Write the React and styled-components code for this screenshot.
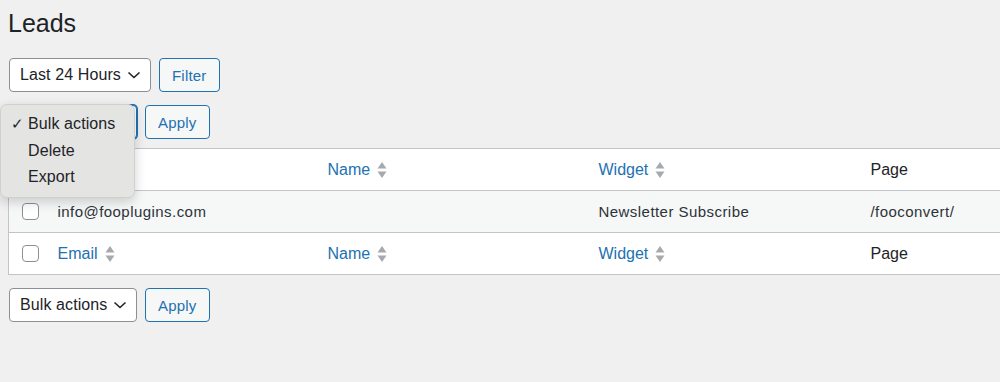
import styled, { createGlobalStyle } from 'styled-components';

const GlobalStyle = createGlobalStyle`
  html, body {
    margin: 0;
    padding: 0;
    background: #f0f0f1;
    overflow: hidden;
  }
  body {
    font-family: "Liberation Sans", Arial, sans-serif;
    color: #1d2327;
  }
`;

const Page = styled.div`
  padding: 0 0 0 8px;
  width: 1200px;
`;

const Title = styled.h1`
  margin: 0;
  padding-top: 8px;
  font-size: 25px;
  font-weight: 400;
  line-height: 30px;
  color: #1d2327;
`;

const Toolbar = styled.div`
  display: flex;
  align-items: center;
  gap: 8px;
  margin-top: ${p => p.$top || 0}px;
  position: relative;
`;

const SelectBox = styled.div`
  box-sizing: border-box;
  height: 34px;
  width: ${p => p.$width}px;
  margin-left: 1px;
  padding: 0 9px 0 10px;
  display: flex;
  align-items: center;
  justify-content: space-between;
  background: #fff;
  border: 1px solid ${p => (p.$focus ? '#2271b1' : '#8c8f94')};
  box-shadow: ${p => (p.$focus ? '0 0 0 1px #2271b1' : 'none')};
  border-radius: 4px;
  font-size: 16px;
  letter-spacing: 0.1px;
  color: #1d2327;
`;

const Button = styled.div`
  box-sizing: border-box;
  height: 34px;
  padding: 0 12px;
  display: flex;
  align-items: center;
  border: 1px solid #2271b1;
  border-radius: 4px;
  background: #f6f7f7;
  color: #2271b1;
  font-size: 15px;
  letter-spacing: 0.2px;
`;

const Chevron = () => (
  <svg width="14" height="10" viewBox="0 0 14 10" fill="none">
    <path d="M1.5 2.5 L7 7.5 L12.5 2.5" stroke="#1d2327" strokeWidth="1.6" />
  </svg>
);

const Menu = styled.div`
  position: absolute;
  left: -8px;
  top: -1px;
  width: 135px;
  box-sizing: border-box;
  padding: 6px 0;
  background: #e4e4e3;
  border: 1px solid #d0d0cf;
  border-radius: 7px;
  box-shadow: 0 4px 12px rgba(0, 0, 0, 0.18);
  z-index: 5;
`;

const MenuItem = styled.div`
  position: relative;
  height: 26.5px;
  line-height: 26.5px;
  padding-left: 27px;
  font-size: 16px;
  letter-spacing: 0.1px;
  color: #1d2327;
`;

const Check = styled.span`
  position: absolute;
  left: 10px;
  font-size: 15px;
`;

const Table = styled.table`
  margin-top: 9px;
  width: 1130px;
  border-collapse: collapse;
  border: 1px solid #c3c4c7;
  background: #fff;
  table-layout: fixed;
`;

const Row = styled.tr`
  height: 42px;
  background: ${p => (p.$alt ? '#f6f7f7' : '#fff')};
  border-top: 1px solid #c3c4c7;
`;

const Cell = styled.td`
  padding: 0 10px;
  font-size: ${p => (p.$head ? 16 : 15)}px;
  letter-spacing: ${p => (p.$head ? 0 : 0.45)}px;
  color: ${p => (p.$head ? '#1d2327' : '#2c3338')};
  white-space: nowrap;
  vertical-align: middle;
`;

const CheckCell = styled.td`
  width: 39px;
  box-sizing: border-box;
  padding: 4px 0 0 13px;
  vertical-align: middle;
`;

const Checkbox = styled.span`
  display: inline-block;
  box-sizing: border-box;
  width: 17px;
  height: 17px;
  border: 1px solid #8c8f94;
  border-radius: 4px;
  background: #fff;
`;

const SortLink = styled.span`
  display: inline-flex;
  align-items: center;
  gap: 7px;
  color: #2271b1;
`;

const SortIcon = () => (
  <svg width="10" height="18" viewBox="0 0 10 18">
    <path d="M5 1 L9.5 7.5 H0.5 Z" fill="#a7aaad" />
    <path d="M0.5 10.5 H9.5 L5 17 Z" fill="#a7aaad" />
  </svg>
);

const Sortable = ({ label }) => (
  <SortLink>
    {label}
    <SortIcon />
  </SortLink>
);

const HeaderRow = () => (
  <Row>
    <CheckCell>
      <Checkbox />
    </CheckCell>
    <Cell $head>
      <Sortable label="Email" />
    </Cell>
    <Cell $head>
      <Sortable label="Name" />
    </Cell>
    <Cell $head>
      <Sortable label="Widget" />
    </Cell>
    <Cell $head>Page</Cell>
  </Row>
);

export default function App() {
  return (
    <Page>
      <GlobalStyle />
      <Title>Leads</Title>
      <Toolbar $top={20}>
        <SelectBox $width={142}>
          Last 24 Hours <Chevron />
        </SelectBox>
        <Button>Filter</Button>
      </Toolbar>
      <Toolbar $top={13}>
        <SelectBox $width={128} $focus>
          Bulk actions <Chevron />
        </SelectBox>
        <Button>Apply</Button>
        <Menu>
          <MenuItem>
            <Check>✓</Check>Bulk actions
          </MenuItem>
          <MenuItem>Delete</MenuItem>
          <MenuItem>Export</MenuItem>
        </Menu>
      </Toolbar>
      <Table>
        <colgroup>
          <col style={{ width: 39 }} />
          <col style={{ width: 270 }} />
          <col style={{ width: 271 }} />
          <col style={{ width: 272 }} />
          <col />
        </colgroup>
        <thead>
          <HeaderRow />
        </thead>
        <tbody>
          <Row $alt>
            <CheckCell>
              <Checkbox />
            </CheckCell>
            <Cell>info@fooplugins.com</Cell>
            <Cell></Cell>
            <Cell>Newsletter Subscribe</Cell>
            <Cell>/fooconvert/</Cell>
          </Row>
        </tbody>
        <tfoot>
          <HeaderRow />
        </tfoot>
      </Table>
      <Toolbar $top={13}>
        <SelectBox $width={128}>
          Bulk actions <Chevron />
        </SelectBox>
        <Button>Apply</Button>
      </Toolbar>
    </Page>
  );
}
